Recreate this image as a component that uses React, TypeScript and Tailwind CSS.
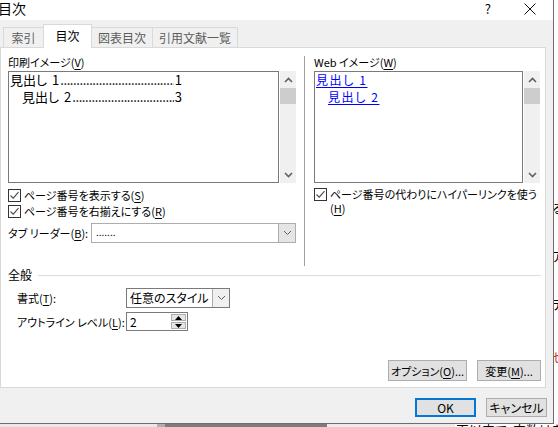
import React from 'react';

const font = "font-['Noto_Sans_CJK_JP','Noto_Sans',sans-serif] [font-feature-settings:'palt']";

function CheckBox() {
    return (
        <span className="flex h-[13px] w-[13px] shrink-0 items-center justify-center border border-[#333333] bg-white">
            <svg width="11" height="11" viewBox="0 0 11 11">
                <path d="M1.5 5.5 L4.2 8.2 L9.5 2.2" fill="none" stroke="#4a4a4a" strokeWidth="1.1" />
            </svg>
        </span>
    );
}

function Chevron({ up = false, bold = false }: { up?: boolean; bold?: boolean }) {
    return (
        <svg width="9" height="6" viewBox="0 0 9 6">
            <path
                d={up ? 'M1 5 L4.5 1.5 L8 5' : 'M1 1 L4.5 4.5 L8 1'}
                fill="none"
                stroke="#606060"
                strokeWidth={bold ? 1.6 : 1}
            />
        </svg>
    );
}

function Scrollbar() {
    return (
        <div className="ml-px flex h-full w-[16px] flex-col bg-[#f0f0f0]">
            <div className="flex h-[17px] items-center justify-center">
                <Chevron up bold />
            </div>
            <div className="h-[16px] w-full bg-[#cdcdcd]" />
            <div className="flex-1" />
            <div className="flex h-[17px] items-center justify-center">
                <Chevron bold />
            </div>
        </div>
    );
}

function Mn({ c }: { c: string }) {
    return <span className="underline underline-offset-2">{c}</span>;
}

function Leader({ num, page, indent }: { num: string; page: string; indent: string }) {
    return (
        <div className={`flex w-[172px] whitespace-nowrap ${indent}`}>
            <span>見出し</span>
            <span className="ml-[5px]">{num}</span>
            <span className="flex-1 overflow-hidden pl-px tracking-[-0.4px]">
                ..................................................................
            </span>
            <span className="pl-px">{page}</span>
        </div>
    );
}

function Btn({ children, className = '' }: { children: React.ReactNode; className?: string }) {
    return (
        <div
            className={`flex items-center justify-center whitespace-nowrap border border-[#adadad] bg-[#e1e1e1] ${className}`}
        >
            {children}
        </div>
    );
}

export default function App() {
    return (
        <div className={`flex h-[427px] w-[558px] flex-col overflow-hidden whitespace-nowrap bg-white text-[11px] leading-[14px] text-black ${font}`}>
            <div className="flex h-[424px]">
                {/* dialog */}
                <div className="flex h-[424px] w-[554px] shrink-0 flex-col border-r border-b border-[#6e6e6e] bg-[#f0f0f0]">
                    {/* title bar */}
                    <div className="flex h-[20px] items-start bg-white">
                        <span className="-ml-[2px] text-[14px] leading-[16px]">目次</span>
                        <span className="ml-auto mt-[1px] text-[13px] leading-[15px]">?</span>
                        <svg className="ml-[33px] mr-[17px] mt-[3px]" width="12" height="12" viewBox="0 0 12 12">
                            <path d="M0.5 0.5 L11.5 11.5 M11.5 0.5 L0.5 11.5" stroke="#111" strokeWidth="1" />
                        </svg>
                    </div>

                    {/* tabs */}
                    <div className="flex h-[27px] items-end pl-[3px] text-[12px]">
                        <div className="flex h-[20px] w-[41px] items-center justify-center border border-b-0 border-[#d9d9d9] text-[#5c5c5c]">
                            索引
                        </div>
                        <div className="relative z-10 -mb-px -ml-px flex h-[24px] w-[49px] items-center justify-center border border-b-0 border-[#d9d9d9] bg-white pb-[2px]">
                            目次
                        </div>
                        <div className="-ml-px flex h-[20px] w-[62px] items-center justify-center border border-b-0 border-[#d9d9d9] text-[#5c5c5c]">
                            図表目次
                        </div>
                        <div className="-ml-px flex h-[20px] w-[86px] items-center justify-center border border-b-0 border-[#d9d9d9] text-[#5c5c5c]">
                            引用文献一覧
                        </div>
                    </div>

                    {/* panel */}
                    <div className="flex h-[341px] w-[546px] flex-col border border-[#d9d9d9] bg-white pl-[7px] pr-[4px] pt-[7px]">
                        <div className="flex h-[211px]">
                            {/* left column */}
                            <div className="flex w-[288px] flex-col">
                                <div>
                                    印刷イメージ(<Mn c="V" />)
                                </div>
                                <div className="mt-[2px] flex h-[112px]">
                                    <div className="h-full w-[271px] border border-[#7a7a7a] pl-px text-[13px] leading-[17px]">
                                        <div className="-mt-px">
                                            <Leader num="1" page="1" indent="" />
                                            <Leader num="2" page="3" indent="pl-[12px]" />
                                        </div>
                                    </div>
                                    <Scrollbar />
                                </div>
                                <div className="mt-[4px] flex h-[16px] items-center gap-[3px]">
                                    <CheckBox />
                                    <span>
                                        ページ番号を表示する(<Mn c="S" />)
                                    </span>
                                </div>
                                <div className="flex h-[16px] items-center gap-[3px]">
                                    <CheckBox />
                                    <span>
                                        ページ番号を右揃えにする(<Mn c="R" />)
                                    </span>
                                </div>
                                <div className="mt-[4px] flex h-[20px] items-center">
                                    <span className="w-[83px] shrink-0">
                                        タブ リーダー(<Mn c="B" />):
                                    </span>
                                    <div className="flex h-full w-[205px] border border-[#adadad] bg-white">
                                        <span className="flex-1 pl-[4px] text-[10px] leading-[16px]">.......</span>
                                        <div className="flex w-[17px] items-center justify-center border-l border-[#adadad] bg-[#e5e5e5]">
                                            <Chevron />
                                        </div>
                                    </div>
                                </div>
                            </div>

                            {/* separator */}
                            <div className="ml-[8px] mt-px w-px bg-[#a0a0a0]" />

                            {/* right column */}
                            <div className="ml-[9px] flex w-[226px] flex-col">
                                <div>
                                    Web イメージ(<Mn c="W" />)
                                </div>
                                <div className="mt-[2px] flex h-[112px]">
                                    <div className="h-full w-[209px] border border-[#7a7a7a] pl-px text-[12px] leading-[17px] tracking-[1.6px] text-[#0000ff]">
                                        <div className="-mt-px">
                                            <div>
                                                <span className="underline underline-offset-2">見出し 1</span>
                                            </div>
                                            <div className="pl-[12px]">
                                                <span className="underline underline-offset-2">見出し 2</span>
                                            </div>
                                        </div>
                                    </div>
                                    <Scrollbar />
                                </div>
                                <div className="mt-[4px] flex items-start gap-[3px]">
                                    <div className="mt-px">
                                        <CheckBox />
                                    </div>
                                    <span>
                                        ページ番号の代わりにハイパーリンクを使う
                                        <br />(<Mn c="H" />)
                                    </span>
                                </div>
                            </div>
                        </div>

                        {/* general */}
                        <div className="mt-[2px] flex h-[14px] items-center">
                            <span className="text-[12px]">全般</span>
                            <div className="ml-[6px] h-px flex-1 bg-[#dcdcdc]" />
                        </div>
                        <div className="mt-[6px] flex h-[20px] items-center pl-[9px]">
                            <span className="w-[109px] shrink-0">
                                書式(<Mn c="T" />):
                            </span>
                            <div className="flex h-full w-[104px] border border-[#7a7a7a] bg-white">
                                <span className="flex-1 pl-[3px] text-[12px] leading-[18px]">任意のスタイル</span>
                                <div className="flex w-[17px] items-center justify-center border-l border-[#adadad] bg-[#f0f0f0]">
                                    <Chevron />
                                </div>
                            </div>
                        </div>
                        <div className="mt-[4px] flex h-[19px] items-center pl-[9px]">
                            <span className="w-[109px] shrink-0">
                                アウトライン レベル(<Mn c="L" />):
                            </span>
                            <div className="flex h-full w-[62px] border border-[#7a7a7a] bg-white">
                                <span className="flex-1 pl-[3px] text-[12px] leading-[17px]">2</span>
                                <div className="my-px mr-px flex w-[15px] flex-col gap-px">
                                    <div className="flex flex-1 items-center justify-center border border-[#adadad] bg-[#e5e5e5]">
                                        <svg width="7" height="4" viewBox="0 0 7 4">
                                            <path d="M0 4 L3.5 0 L7 4 Z" fill="#000" />
                                        </svg>
                                    </div>
                                    <div className="flex flex-1 items-center justify-center border border-[#adadad] bg-[#e5e5e5]">
                                        <svg width="7" height="4" viewBox="0 0 7 4">
                                            <path d="M0 0 L3.5 4 L7 0 Z" fill="#000" />
                                        </svg>
                                    </div>
                                </div>
                            </div>
                        </div>

                        <div className="mt-[29px] flex h-[21px] justify-end gap-[10px]">
                            <Btn className="w-[79px]">
                                オプション(<Mn c="O" />)...
                            </Btn>
                            <Btn className="w-[64px]">
                                変更(<Mn c="M" />)...
                            </Btn>
                        </div>
                    </div>

                    {/* dialog buttons */}
                    <div className="mt-[10px] flex h-[19px] justify-end gap-[10px] pr-[6px] text-[12px]">
                        <div className="flex w-[61px] items-center justify-center border-2 border-[#0078d7] bg-[#e1e1e1]">
                            OK
                        </div>
                        <Btn className="w-[61px]">キャンセル</Btn>
                    </div>
                </div>

                {/* document behind, right edge */}
                <div className="w-[4px] overflow-hidden text-[13px] leading-[15px]">
                    <div className="-ml-[2px] w-[20px]">
                        <div className="mt-[200px]">る</div>
                        <div className="mt-[33px]">ア</div>
                        <div className="mt-[33px]">デ</div>
                        <div className="mt-[38px] text-[#c0392b]">せ</div>
                    </div>
                </div>
            </div>

            {/* document behind, bottom edge */}
            <div className="flex h-[3px]">
                <div className="w-[157px] bg-[#e8e8e8]" />
                <div className="w-[8px] bg-[#b0b0b0]" />
                <div className="w-[162px] bg-[#7c7c7c]" />
                <div className="w-[128px] bg-[#ececec]" />
                <div className="flex-1 overflow-hidden bg-white">
                    <div className="-mt-[2px] pl-[1px] text-[13px] leading-[15px]">頁以内で、字数はを含む</div>
                </div>
            </div>
        </div>
    );
}
